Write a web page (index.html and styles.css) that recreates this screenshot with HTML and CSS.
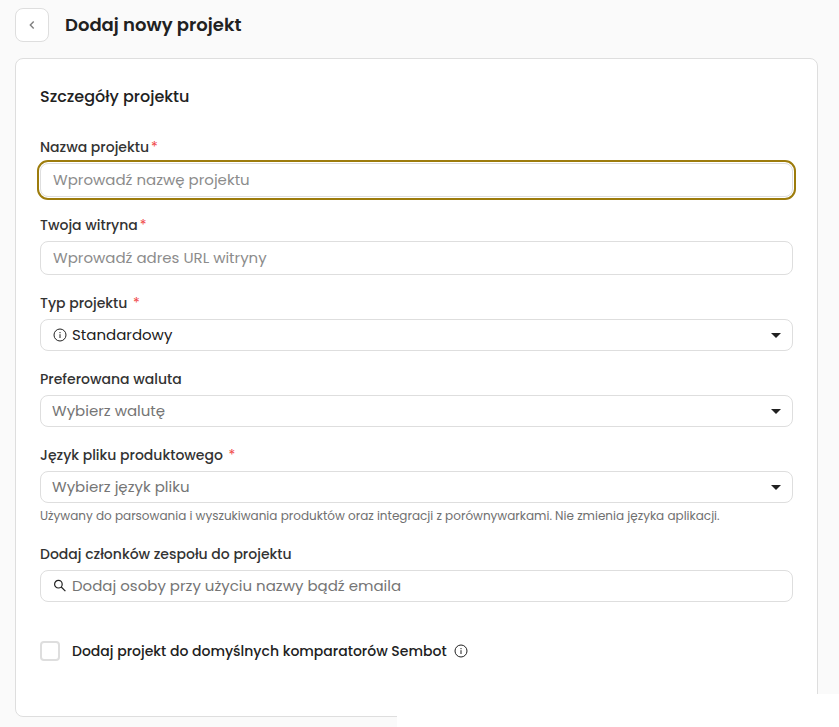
FILE: index.html
```html
<!DOCTYPE html>
<html lang="pl">
<head>
	<meta charset="UTF-8">
	<meta name="viewport" content="width=device-width, initial-scale=1.0">
	<title>Dodaj nowy projekt</title>
	<link rel="stylesheet" href="styles.css">
</head>
<body>
	<header class="page-header">
		<button type="button" class="btn-back" aria-label="Wstecz">
			<svg width="8" height="10" viewBox="0 0 8 10" fill="none" stroke="currentColor" stroke-width="1.4"><path d="M5.7 1.4 2.3 5l3.4 3.6"/></svg>
		</button>
		<h1 class="page-title">Dodaj nowy projekt</h1>
	</header>
	<main class="card">
		<h2 class="card-title">Szczegóły projektu</h2>
		<form class="form">
			<div class="field">
				<label class="label" for="name">Nazwa projektu<span class="required">*</span></label>
				<input class="control tall focused" type="text" id="name" placeholder="Wprowadź nazwę projektu">
			</div>
			<div class="field">
				<label class="label" for="site">Twoja witryna<span class="required">*</span></label>
				<input class="control tall" type="text" id="site" placeholder="Wprowadź adres URL witryny">
			</div>
			<div class="field">
				<label class="label" for="type">Typ projektu <span class="required">*</span></label>
				<div class="control with-icon">
					<svg class="icon" width="14" height="14" viewBox="0 0 14 14" fill="none" stroke="currentColor"><circle cx="7" cy="7" r="6"/><path d="M7 6.2V10M7 4v1.2"/></svg>
					<select class="inner select" id="type">
						<option>Standardowy</option>
					</select>
				</div>
			</div>
			<div class="field">
				<label class="label" for="currency">Preferowana waluta</label>
				<select class="control select empty" id="currency">
					<option>Wybierz walutę</option>
				</select>
			</div>
			<div class="field">
				<label class="label" for="lang">Język pliku produktowego <span class="required">*</span></label>
				<select class="control select empty" id="lang">
					<option>Wybierz język pliku</option>
				</select>
				<p class="help">Używany do parsowania i wyszukiwania produktów oraz integracji z porównywarkami. Nie zmienia języka aplikacji.</p>
			</div>
			<div class="field">
				<label class="label" for="members">Dodaj członków zespołu do projektu</label>
				<div class="control with-icon">
					<svg class="icon" width="14" height="14" viewBox="0 0 14 14" fill="none" stroke="currentColor" stroke-width="1.2"><circle cx="5.4" cy="5.2" r="3.8"/><path d="m8.2 8 4.2 4.2"/></svg>
					<input class="inner" type="text" id="members" placeholder="Dodaj osoby przy użyciu nazwy bądź emaila">
				</div>
			</div>
			<div class="check-row">
				<input class="checkbox" type="checkbox" id="compare">
				<label class="check-label" for="compare">Dodaj projekt do domyślnych komparatorów Sembot</label>
				<svg class="icon" width="14" height="14" viewBox="0 0 14 14" fill="none" stroke="currentColor"><circle cx="7" cy="7" r="6"/><path d="M7 6.2V10M7 4v1.2"/></svg>
			</div>
		</form>
	</main>
	<div class="corner-panel"></div>
</body>
</html>
```

FILE: styles.css
```css
*{ box-sizing: border-box; }
body{
	margin: 0; padding: 8px 21px 10px 15px; background-color: #fafafa;
	font-family: Poppins, Inter, "Noto Sans", sans-serif; font-size: 14px; color: #212121;
}
.page-header{
	display: flex; align-items: center; gap: 16px; margin-bottom: 16px;
}
.btn-back{
	display: flex; align-items: center; justify-content: center;
	width: 34px; height: 34px; padding: 0; border: 1px solid #dedede;
	border-radius: 8px; background-color: #fff; color: #808080;
}
.page-title{
	margin: 0; font-size: 18px; line-height: 26px; font-weight: 600;
}
.card{
	padding: 24px 24px 55px; border: 1px solid #dedede; border-radius: 8px;
	background-color: #fff;
}
.card-title{
	margin: 0 0 26px; font-size: 16px; line-height: 28px; font-weight: 500;
}
.form{
	display: flex; flex-direction: column; gap: 18px;
}
.field{
	display: flex; flex-direction: column;
}
.label{
	margin-bottom: 6px; line-height: 20px; font-weight: 500; color: #333;
}
.required{
	margin-left: 2px; font-weight: 400; color: #f04848;
}
.control{
	width: 100%; height: 32px; padding: 0 11px 2px; border: 1px solid #dedede;
	border-radius: 8px; background-color: #fff; color: #212121;
	font-family: inherit; font-size: 15px;
}
.tall{
	height: 34px; padding: 0 12px 2px;
}
.tall::placeholder{
	color: #8c8c8c;
}
.focused, .control:focus{
	outline: 2px solid #9d7c0c; outline-offset: 1px;
}
.with-icon{
	display: flex; align-items: center; gap: 5px; padding: 0 0 0 12px;
}
.icon{
	flex: none;
}
.inner{
	flex: 1; min-width: 0; height: 100%; padding: 0 0 2px; border: 0;
	background-color: transparent; color: inherit; font: inherit; outline: 0;
}
.inner::placeholder{
	color: #757575;
}
.select{
	appearance: none;
	background-image: url("data:image/svg+xml,%3Csvg xmlns='http://www.w3.org/2000/svg' width='10' height='5'%3E%3Cpath d='M0 0h10L5 5z' fill='%23212121'/%3E%3C/svg%3E");
	background-repeat: no-repeat; background-position: right 11px center;
}
.empty{
	color: #757575;
}
.help{
	margin: 3px 0 0; font-size: 12px; line-height: 20px; color: #707070;
}
.check-row{
	display: flex; align-items: center; margin-top: 21px;
}
.checkbox{
	appearance: none; width: 20px; height: 20px; margin: 0 12px 0 0;
	border: 2px solid #dedede; border-radius: 4px; background-color: #fff;
}
.checkbox:checked{
	background-color: #9d7c0c;
}
.check-label{
	margin-right: 7px; line-height: 20px; font-weight: 500;
}
/* panel docked over the page corner */
.corner-panel{
	position: fixed; right: 0; bottom: 0; width: 442px; height: 33px;
	background-color: #fff;
}
```
